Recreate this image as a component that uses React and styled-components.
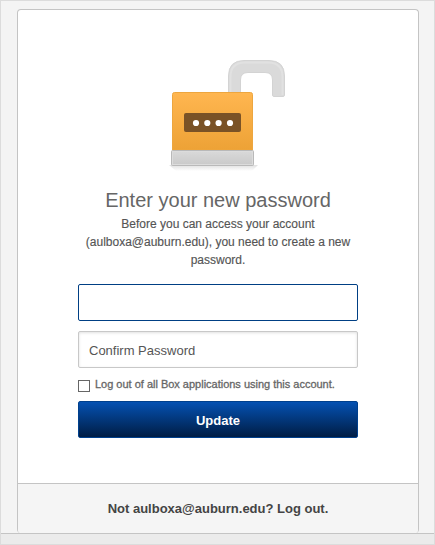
import React from "react";

import styled, { createGlobalStyle } from "styled-components";

const GlobalStyle = createGlobalStyle`
  * {
    box-sizing: border-box;
  }
  body {
    margin: 0;
    font-family: "Liberation Sans", Arial, sans-serif;
  }
`;

const Page = styled.div`
  display: flex;
  flex-direction: column;
  height: 545px;
  background: #f4f4f4;
  border: 1px solid #dcdcdc;
`;

const Card = styled.main`
  display: flex;
  flex-direction: column;
  width: 402px;
  height: 524px;
  margin: 8px 0 0 16px;
  background: white;
  border: 1px solid #c4c4c4;
  border-bottom: none;
  border-radius: 4px;
  overflow: hidden;
`;

const Content = styled.section`
  display: flex;
  flex-direction: column;
  align-items: center;
  height: 473px;
  padding-top: 46px;
`;

const LockIcon = styled.svg`
  display: block;
  width: 140px;
  height: 120px;
  flex-shrink: 0;
`;

const Title = styled.h1`
  margin: 11px 0 0;
  font-size: 20px;
  font-weight: normal;
  line-height: 26px;
  color: #666;
`;

const Text = styled.p`
  width: 280px;
  margin: 2px 0 0;
  font-size: 12px;
  line-height: 18px;
  text-align: center;
  color: #555;
  -webkit-text-stroke: 0.15px #555;
`;

const Form = styled.form`
  display: flex;
  flex-direction: column;
  width: 280px;
  margin-top: 15px;
`;

const Input = styled.input`
  width: 100%;
  height: 37px;
  margin: 0 0 10px;
  padding: 2px 10px 0;
  font-family: inherit;
  font-size: 13px;
  color: #555;
  background: white;
  border: 1px solid ${(props) => (props.$active ? "#003f84" : "#c8c8c8")};
  border-radius: 2px;
  outline: none;
  box-shadow: ${(props) =>
    props.$active ? "none" : "inset 0 1px 3px rgba(0, 0, 0, 0.12)"};

  &::placeholder {
    color: #555;
    opacity: 1;
  }
`;

const CheckLabel = styled.label`
  display: flex;
  height: 23px;
  font-size: 11px;
  line-height: 12px;
  letter-spacing: -0.01px;
  white-space: nowrap;
  color: #666;
  -webkit-text-stroke: 0.3px #666;
`;

const Checkbox = styled.input`
  appearance: none;
  width: 12px;
  height: 12px;
  margin: 2px 5px 0 0;
  background: white;
  border: 1px solid #666;
`;

const Button = styled.button`
  height: 37px;
  padding: 2px 0 0;
  font-family: inherit;
  font-size: 13px;
  font-weight: bold;
  color: white;
  background: linear-gradient(#0551b2, #001d44);
  border: 1px solid #00408d;
  border-radius: 2px;
  cursor: pointer;
`;

const Footer = styled.footer`
  display: flex;
  align-items: center;
  justify-content: center;
  height: 50px;
  flex-grow: 1;
  font-size: 13px;
  font-weight: bold;
  color: #444;
  background: #f5f5f5;
  border-top: 1px solid #c4c4c4;
`;

const BottomBar = styled.div`
  flex-grow: 1;
  background: #ebebeb;
  border-top: 1px solid #c4c4c4;
`;

const Lock = () => (
  <LockIcon viewBox="148 56 140 120">
    <defs>
      <linearGradient id="body" x1="0" y1="0" x2="0" y2="1">
        <stop offset="0" stopColor="#ffb650" />
        <stop offset="1" stopColor="#eda236" />
      </linearGradient>
      <linearGradient id="base" x1="0" y1="0" x2="0" y2="1">
        <stop offset="0" stopColor="#dadada" />
        <stop offset="1" stopColor="#c9c9c9" />
      </linearGradient>
      <linearGradient id="floor" x1="0" y1="0" x2="0" y2="1">
        <stop offset="0" stopColor="#000" stopOpacity="0.12" />
        <stop offset="1" stopColor="#000" stopOpacity="0" />
      </linearGradient>
    </defs>
    <path
      d="M228.5 94V76Q228.5 60.5 244 60.5H269Q284.5 60.5 284.5 76V95Q284.5 96.5 283 96.5H274Q272.5 96.5 272.5 95V80Q272.5 72.5 265 72.5H248Q240.5 72.5 240.5 80V94Z"
      fill="#dadada"
      stroke="#d3d3d3"
    />
    <path
      d="M230.5 92V77Q230.5 62.5 245 62.5H268Q282.5 62.5 282.5 77V95"
      fill="none"
      stroke="#e1e1e1"
      strokeWidth="2"
    />
    <path d="M169 165H258L252 171H176Z" fill="url(#floor)" />
    <path
      d="M172.5 150V94.5Q172.5 92.5 174.5 92.5H250.5Q252.5 92.5 252.5 94.5V150Z"
      fill="url(#body)"
      stroke="#eda63f"
    />
    <rect x="171.5" y="150.5" width="82" height="15" rx="1" fill="url(#base)" stroke="#b9b9b9" />
    <rect x="172.5" y="151.5" width="80" height="13" fill="none" stroke="#dcdcdc" />
    <rect x="184" y="113" width="57" height="19" rx="2" fill="#7a5226" />
    {[196, 207.3, 218.6, 230].map((x) => (
      <circle key={x} cx={x} cy="123" r="3.1" fill="white" />
    ))}
  </LockIcon>
);

const App = () => {
  return (
    <>
      <GlobalStyle />
      <Page>
        <Card>
          <Content>
            <Lock />
            <Title>Enter your new password</Title>
            <Text>
              Before you can access your account
              <br />
              (aulboxa@auburn.edu), you need to create a new
              <br />
              password.
            </Text>
            <Form>
              <Input $active type="password" aria-label="New Password" />
              <Input type="password" placeholder="Confirm Password" />
              <CheckLabel>
                <Checkbox type="checkbox" />
                Log out of all Box applications using this account.
              </CheckLabel>
              <Button type="submit">Update</Button>
            </Form>
          </Content>
          <Footer>Not aulboxa@auburn.edu? Log out.</Footer>
        </Card>
        <BottomBar />
      </Page>
    </>
  );
};

export default App;
